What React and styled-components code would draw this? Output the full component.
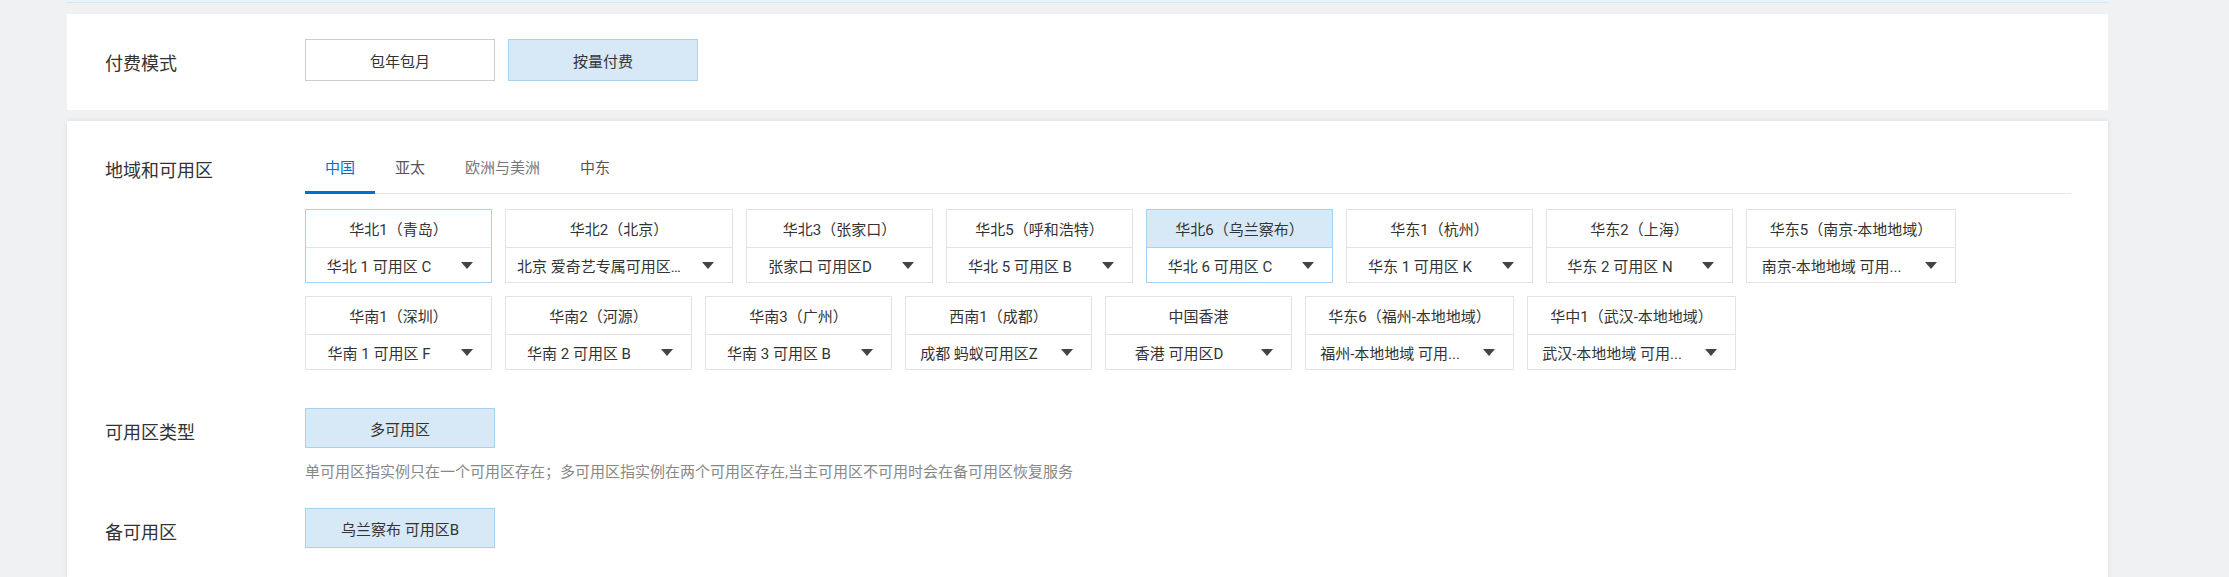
import React from "react";
import styled, { createGlobalStyle, css } from "styled-components";

const GlobalStyle = createGlobalStyle`
  * {
    box-sizing: border-box;
  }
  body {
    margin: 0;
    background: #f0f1f3;
    font-family: Roboto, "Noto Sans CJK SC", sans-serif;
    color: #333;
  }
`;

const regionsRowOne = [
  { name: "华北1（青岛）", zone: "华北 1 可用区 C", hover: true },
  { name: "华北2（北京）", zone: "北京 爱奇艺专属可用区...", width: 228 },
  { name: "华北3（张家口）", zone: "张家口 可用区D" },
  { name: "华北5（呼和浩特）", zone: "华北 5 可用区 B" },
  { name: "华北6（乌兰察布）", zone: "华北 6 可用区 C", selected: true },
  { name: "华东1（杭州）", zone: "华东 1 可用区 K" },
  { name: "华东2（上海）", zone: "华东 2 可用区 N" },
  { name: "华东5（南京-本地地域）", zone: "南京-本地地域 可用...", width: 210 },
];

const regionsRowTwo = [
  { name: "华南1（深圳）", zone: "华南 1 可用区 F" },
  { name: "华南2（河源）", zone: "华南 2 可用区 B" },
  { name: "华南3（广州）", zone: "华南 3 可用区 B" },
  { name: "西南1（成都）", zone: "成都 蚂蚁可用区Z" },
  { name: "中国香港", zone: "香港 可用区D" },
  { name: "华东6（福州-本地地域）", zone: "福州-本地地域 可用...", width: 209 },
  { name: "华中1（武汉-本地地域）", zone: "武汉-本地地域 可用...", width: 209 },
];

const tabs = [
  { label: "中国", active: true },
  { label: "亚太" },
  { label: "欧洲与美洲", muted: true },
  { label: "中东" },
];

const Page = styled.div`
  padding-left: 67px;
  width: 2108px;
`;

const TopStrip = styled.div`
  height: 3px;
  background: #e6f5fd;
  border-bottom: 1px solid #dde5ea;
`;

const Panel = styled.section`
  background: #fff;
  margin-top: ${(props) => props.$gap}px;
  padding: 25px 37px 26px 38px;
  ${(props) =>
    props.$raised &&
    css`
      box-shadow: 0 0 5px rgba(0, 0, 0, 0.09);
    `}
`;

const Row = styled.div`
  display: grid;
  grid-template-columns: 200px 1fr;
  margin-top: ${(props) => props.$top || 0}px;
`;

const Label = styled.div`
  font-size: 18px;
  line-height: 40px;
  padding-top: 5px;
  color: #333;
`;

const ButtonGroup = styled.div`
  display: flex;
  gap: 13px;
`;

const Choice = styled.div`
  width: 190px;
  height: ${(props) => props.$height || 40}px;
  display: flex;
  align-items: center;
  justify-content: center;
  font-size: 15px;
  color: #333;
  border: 1px solid ${(props) => (props.$active ? "#a9d1f0" : "#cccccc")};
  background: ${(props) => (props.$active ? "#d7e9f6" : "#fff")};
`;

const TabBar = styled.div`
  display: flex;
  border-bottom: 1px solid #e6e6e6;
`;

const Tab = styled.div`
  height: 48px;
  margin-bottom: -1px;
  padding: 0 20px;
  font-size: 15px;
  line-height: 45px;
  color: ${(props) =>
    props.$active ? "#0070cc" : props.$muted ? "#777" : "#555"};
  border-bottom: 3px solid
    ${(props) => (props.$active ? "#0070cc" : "transparent")};
`;

const RegionGrid = styled.div`
  display: flex;
  flex-wrap: wrap;
  gap: 13px;
  margin-top: 15px;
`;

const RegionCard = styled.div`
  width: ${(props) => props.$width || 187}px;
  height: 74px;
  border: 1px solid
    ${(props) => (props.$highlight ? "#a9d1f0" : "#e3e3e3")};
  display: flex;
  flex-direction: column;
`;

const RegionName = styled.div`
  height: 38px;
  display: flex;
  align-items: center;
  justify-content: center;
  font-size: 15px;
  color: #333;
  white-space: nowrap;
  border-bottom: 1px solid
    ${(props) => (props.$selected ? "#a9d1f0" : "#e3e3e3")};
  background: ${(props) => (props.$selected ? "#d7e9f6" : "#fff")};
`;

const ZoneSelect = styled.div`
  flex: 1;
  display: flex;
  align-items: center;
  padding: 0 18px 0 11px;
`;

const ZoneText = styled.span`
  flex: 1;
  min-width: 0;
  font-size: 15px;
  color: #333;
  text-align: center;
  white-space: nowrap;
  overflow: hidden;
  text-overflow: ellipsis;
  margin-right: 20px;
`;

const Caret = styled.svg`
  flex: 0 0 12px;
  width: 12px;
  height: 7px;
`;

const Hint = styled.div`
  margin-top: 14px;
  font-size: 15px;
  line-height: 20px;
  color: #888;
`;

function Region({ region }) {
  return (
    <RegionCard
      $width={region.width}
      $highlight={region.selected || region.hover}
    >
      <RegionName $selected={region.selected}>{region.name}</RegionName>
      <ZoneSelect>
        <ZoneText>{region.zone}</ZoneText>
        <Caret viewBox="0 0 12 7">
          <polygon points="0,0 12,0 6,7" fill="#444" />
        </Caret>
      </ZoneSelect>
    </RegionCard>
  );
}

export default function App() {
  return (
    <>
      <GlobalStyle />
      <Page>
        <TopStrip />
        <Panel $gap={11}>
          <Row>
            <Label>付费模式</Label>
            <ButtonGroup>
              <Choice $height={42}>包年包月</Choice>
              <Choice $height={42} $active>
                按量付费
              </Choice>
            </ButtonGroup>
          </Row>
        </Panel>
        <Panel $gap={11} $raised>
          <Row>
            <Label>地域和可用区</Label>
            <div>
              <TabBar>
                {tabs.map((tab) => (
                  <Tab key={tab.label} $active={tab.active} $muted={tab.muted}>
                    {tab.label}
                  </Tab>
                ))}
              </TabBar>
              <RegionGrid>
                {regionsRowOne.concat(regionsRowTwo).map((region) => (
                  <Region key={region.name} region={region} />
                ))}
              </RegionGrid>
            </div>
          </Row>
          <Row $top={38}>
            <Label>可用区类型</Label>
            <div>
              <Choice $active>多可用区</Choice>
              <Hint>
                单可用区指实例只在一个可用区存在；多可用区指实例在两个可用区存在,当主可用区不可用时会在备可用区恢复服务
              </Hint>
            </div>
          </Row>
          <Row $top={26}>
            <Label>备可用区</Label>
            <div>
              <Choice $active>乌兰察布 可用区B</Choice>
            </div>
          </Row>
        </Panel>
      </Page>
    </>
  );
}
